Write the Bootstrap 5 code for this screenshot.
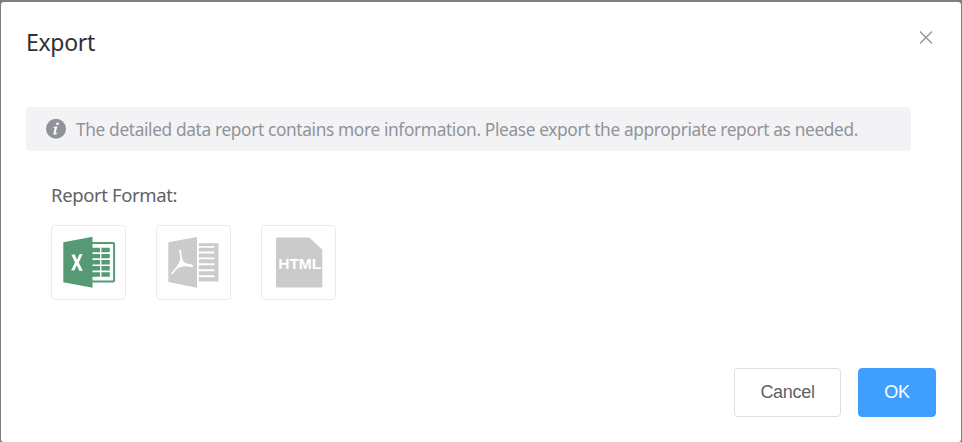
<!DOCTYPE html>
<html lang="en">
<head>
<meta charset="utf-8">
<meta name="viewport" content="width=device-width, initial-scale=1">
<title>Export</title>
<link href="https://cdn.jsdelivr.net/npm/bootstrap@5.3.0/dist/css/bootstrap.min.css" rel="stylesheet">
<style>
html, body { height: 100%; }
body { background: #7f7f7f; font-family: "Noto Sans", "Open Sans", sans-serif; overflow: hidden; padding: 2px 1px 0; }
.export-dialog { height: 440px; border: 0; border-radius: 3px; background: #fff; }
.export-head { padding: 22px 25px 0; height: 105px; }
.export-title { font-size: 23px; line-height: 36px; color: #303133; font-weight: 400; letter-spacing: -.3px; }
.export-close { width: 20px; height: 20px; margin-top: 4px; }
.export-note { margin: 0 50px 0 25px; height: 44px; padding: 0 20px; border: 0; border-radius: 4px; background: #f3f3f5; color: #909399; font-size: 17.3px; letter-spacing: -.355px; gap: 10px; white-space: nowrap; }
.note-text { padding-top: 2px; }
.export-formats { padding: 27px 50px 0; height: 217px; }
.format-label { font-size: 18.5px; line-height: 34px; letter-spacing: -.38px; color: #606266; margin-bottom: 13px; }
.format-list { gap: 30px; }
.format-tile { width: 75px; height: 75px; border: 1px solid #ebebeb; border-radius: 4px; background: #fff; }
.format-tile svg { display: block; margin: -1px; }
.export-foot { padding: 0 25px; gap: 17px; }
.export-foot .btn { height: 49px; border-radius: 4px; font: 18px "Liberation Sans", Arial, sans-serif; letter-spacing: -.3px; }
.btn-cancel { width: 107px; border: 1px solid #dcdfe6; color: #606266; background: #fff; }
.btn-ok { width: 78px; border: 1px solid #409eff; color: #fff; background: #409eff; }
</style>
<script src="https://cdn.jsdelivr.net/npm/bootstrap@5.3.0/dist/js/bootstrap.bundle.min.js" defer></script>
</head>
<body>
<div class="export-dialog modal-content d-flex flex-column" role="dialog" aria-label="Export">
  <div class="export-head d-flex justify-content-between align-items-start">
    <h5 class="export-title m-0">Export</h5>
    <button type="button" class="export-close btn p-0 border-0 d-flex" aria-label="Close">
      <svg width="20" height="20" viewBox="0 0 20 20"><path d="M4 3.5L16 15.5M16 3.5L4 15.5" stroke="#909399" stroke-width="1.3" fill="none"/></svg>
    </button>
  </div>
  <div class="export-note d-flex align-items-center">
    <svg width="20" height="20" viewBox="0 0 20 20" class="flex-shrink-0"><circle cx="10" cy="9.8" r="10" fill="#909399"/><circle cx="11.5" cy="4.7" r="1.3" fill="#fff"/><path d="M7.5 8L11.4 7.3L9.5 14.1Q9.6 14.7 11.4 13.3L11.7 13.8Q9.8 15.9 8.3 15.7Q7.1 15.4 7.5 13.9L8.8 8.9L7.5 8.7Z" fill="#fff"/></svg>
    <span class="note-text">The detailed data report contains more information. Please export the appropriate report as needed.</span>
  </div>
  <div class="export-formats">
    <div class="format-label"><span>Report Format:</span></div>
    <div class="format-list d-flex">
      <div class="format-tile">
        <svg width="75" height="75" viewBox="0 0 75 75" fill="#559a74">
          <path d="M12.3 17.3L41.5 11.8V62.8L12.3 57.2Z"/>
          <path d="M41 18H62Q63.1 18 63.1 19V55.6Q63.1 56.6 62 56.6H41" fill="none" stroke="#559a74" stroke-width="2"/>
          <path d="M41 22.8H49V27.2H41ZM50.4 22.8H58.8V27.2H50.4ZM41 28.9H49V33.3H41ZM50.4 28.9H58.8V33.3H50.4ZM41 35H49V39.4H41ZM50.4 35H58.8V39.4H50.4ZM41 41.1H49V45.5H41ZM50.4 41.1H58.8V45.5H50.4ZM41 47.3H49V51.8H41ZM50.4 47.3H58.8V51.8H50.4Z"/>
          <path d="M20.4 29.7L23.9 29.5L26 34.8L28.4 29.2L31.6 29L27.8 37.4L31.8 46L28.3 45.8L25.8 40.2L23.4 45.5L20.1 45.3L24 37.5Z" fill="#fff"/>
        </svg>
      </div>
      <div class="format-tile">
        <svg width="75" height="75" viewBox="0 0 75 75" fill="#cbcbcb">
          <path d="M12.3 17.3L41 12V62.7L12.3 57Z"/>
          <path d="M42.8 18.3H62.5V56.5H42.8V52.2H58.4V50.3H42.8V46.2H58.4V44.3H42.8V40.2H58.4V38.3H42.8V34.3H58.4V32.4H42.8V28.4H58.4V26.5H42.8V22.8H58.4V20.9H42.8Z"/>
          <path d="M23.4 24.4Q25 23.6 25.3 27C25.5 31.5 26.4 35.2 28.5 37.6C31 39.2 36.5 39 37.3 40.9Q37 42.3 35 42C32 41.6 30.5 40.9 28 41.2C25 41.6 21.8 43 20 44.8C18.4 46.8 17 49.4 15.2 49.5Q14.4 48.3 17.5 45.4C21 42 24.2 37 24.2 32.5C24.2 29 22.8 26.4 23.4 24.4Z" fill="#fff"/>
        </svg>
      </div>
      <div class="format-tile">
        <svg width="75" height="75" viewBox="0 0 75 75">
          <path d="M16.5 12.6H48.3L61.3 24.8V61Q61.3 62.6 59.7 62.6H16.6Q15 62.6 15 61V14.1Q15 12.6 16.5 12.6Z" fill="#cbcbcb"/>
          <text x="17.2" y="44.3" textLength="43" lengthAdjust="spacing" font-family="Liberation Sans, Arial, sans-serif" font-size="15.5" font-weight="700" fill="#fff">HTML</text>
        </svg>
      </div>
    </div>
  </div>
  <div class="export-foot d-flex justify-content-end">
    <button type="button" class="btn btn-cancel p-0">Cancel</button>
    <button type="button" class="btn btn-ok p-0">OK</button>
  </div>
</div>
</body>
</html>
